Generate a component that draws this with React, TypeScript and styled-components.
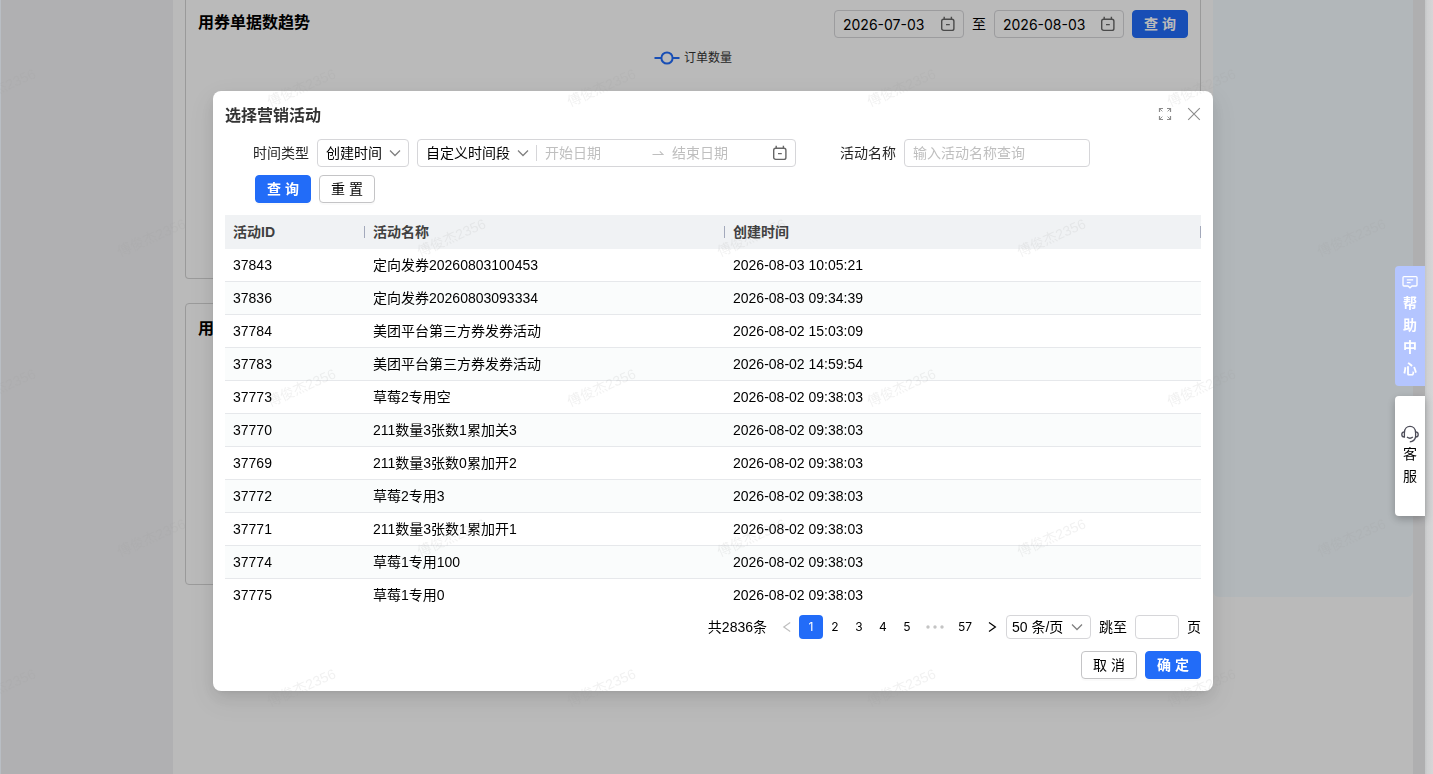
import React from "react";
import styled, { createGlobalStyle } from "styled-components";

const sans = `"Liberation Sans", "Noto Sans CJK SC", sans-serif`;
const digits = `Inter, "Noto Sans CJK SC", sans-serif`;
const primary = "#226cf8";

const GlobalStyle = createGlobalStyle`
  *, *::before, *::after { box-sizing: border-box; }
  body {
    margin: 0;
    font-family: ${sans};
    font-size: 14px;
    line-height: 22px;
    color: #000;
  }
  button, input, select { font: inherit; color: inherit; margin: 0; }
  h2, h3, p { margin: 0; }
`;

/* ---------- page behind the dialog ---------- */

const Page = styled.div`
  display: flex;
  min-height: 100vh;
  background: #fff;
`;

const Sidebar = styled.aside`
  flex: none;
  width: 173px;
  background: #f1f1f4;
  border-left: 1px solid #b9bec4;
`;

const Main = styled.main`
  flex: 1;
  min-width: 0;
`;

const Columns = styled.div`
  display: flex;
`;

const Cards = styled.div`
  flex: 1;
  min-width: 0;
  display: flex;
  flex-direction: column;
  gap: 24px;
  padding: 0 12px 12px;
`;

const SidePanel = styled.aside`
  flex: none;
  width: 200px;
  background: #f4fbff;
  border-radius: 0 0 6px 6px;
`;

const Gutter = styled.div`
  flex: none;
  width: 12px;
  background: #f0f0f2;
`;

const ScrollTrack = styled.div`
  flex: none;
  width: 8px;
  background: linear-gradient(to right, #c4c6c7, #cfd0d1 30%, #d6d6d7);
`;

const Card = styled.section<{ $continued?: boolean }>`
  min-height: ${(p) => (p.$continued ? "279px" : "282px")};
  padding: ${(p) => (p.$continued ? "10px 12px 12px" : "12px")};
  border: 1px solid #d4d4d4;
  border-top-width: ${(p) => (p.$continued ? "0" : "1px")};
  border-radius: ${(p) => (p.$continued ? "0 0 4px 4px" : "4px")};
`;

const CardHeader = styled.div`
  display: flex;
  justify-content: space-between;
  align-items: flex-start;
`;

const CardTitle = styled.h3`
  font-size: 16px;
  line-height: 26px;
  font-weight: 600;
`;

const CardTools = styled.div`
  display: flex;
  align-items: center;
  gap: 8px;
`;

const Legend = styled.p`
  display: flex;
  justify-content: center;
  align-items: center;
  gap: 4px;
  margin-top: 9px;
  font-size: 12px;
  color: #333;
`;

/* ---------- controls ---------- */

const Field = styled.div<{ $width?: number; $small?: boolean; $digits?: boolean }>`
  position: relative;
  display: flex;
  align-items: center;
  width: ${(p) => (p.$width ? `${p.$width}px` : "auto")};
  height: ${(p) => (p.$small ? "24px" : "28px")};
  border: 1px solid #d6d6d9;
  border-radius: 4px;
  font-family: ${(p) => (p.$digits ? digits : sans)};

  & > svg {
    flex: none;
    margin-right: 7px;
  }
`;

const TextInput = styled.input<{ $width?: number }>`
  flex: ${(p) => (p.$width ? "none" : "1")};
  width: ${(p) => (p.$width ? `${p.$width}px` : "auto")};
  min-width: 0;
  height: 100%;
  padding: 0 8px;
  border: 0;
  outline: 0;
  background: transparent;

  &::placeholder {
    color: #bfbfbf;
    opacity: 1;
  }
`;

const Picker = styled.select<{ $small?: boolean }>`
  appearance: none;
  flex: 1;
  min-width: 0;
  height: 100%;
  padding: 0 0 0 ${(p) => (p.$small ? "5px" : "8px")};
  border: 0;
  outline: 0;
  background: transparent;
`;

const Divider = styled.span`
  flex: none;
  width: 1px;
  height: 16px;
  background: #d6d6d9;
`;

const RangeSeparator = styled.span`
  display: flex;
  align-items: center;
  justify-content: center;
  flex: none;
  width: 12px;
`;

const Button = styled.button<{ $primary?: boolean }>`
  width: 56px;
  height: 28px;
  padding: 0;
  border: 1px solid ${(p) => (p.$primary ? primary : "#c4c4c6")};
  border-radius: 4px;
  background: ${(p) => (p.$primary ? primary : "#fff")};
  color: ${(p) => (p.$primary ? "#fff" : "#000")};
  font-weight: ${(p) => (p.$primary ? 600 : 400)};
  line-height: 22px;
  box-shadow: 0 2px 0 rgba(0, 0, 0, 0.02);
`;

const IconButton = styled.button`
  display: flex;
  align-items: center;
  justify-content: center;
  width: 14px;
  height: 14px;
  padding: 0;
  border: 0;
  background: none;
  color: #8c8c8c;
`;

/* ---------- dialog ---------- */

const Mask = styled.div`
  position: fixed;
  inset: 0 8px 0 1px;
  display: grid;
  place-items: center;
  padding-top: 8px;
  background: rgba(0, 0, 0, 0.27);
`;

const Dialog = styled.section`
  width: 1000px;
  max-width: calc(100% - 32px);
  display: flex;
  flex-direction: column;
  padding: 12px;
  border-radius: 8px;
  background: #fff;
  box-shadow:
    0 6px 16px rgba(0, 0, 0, 0.08),
    0 3px 6px -4px rgba(0, 0, 0, 0.12),
    0 9px 28px 8px rgba(0, 0, 0, 0.05);
`;

const DialogHeader = styled.header`
  display: flex;
  justify-content: space-between;
  height: 24px;
`;

const DialogTitle = styled.h2`
  font-size: 16px;
  line-height: 26px;
  font-weight: 600;
  color: #333;
`;

const HeaderActions = styled.div`
  display: flex;
  gap: 15px;
  padding-top: 4px;
`;

const Filters = styled.form`
  display: flex;
  flex-wrap: wrap;
  align-items: center;
  gap: 8px;
  margin: 12px 0;
  padding-left: 28px;
`;

const FilterLabel = styled.label<{ $spaced?: boolean }>`
  margin-left: ${(p) => (p.$spaced ? "36px" : "0")};
  color: #262626;
`;

const FilterButtons = styled.div`
  flex-basis: 100%;
  display: flex;
  gap: 8px;
  padding-left: 2px;
`;

const TableViewport = styled.div`
  height: 394px;
  overflow: hidden;
`;

const Table = styled.table`
  width: 100%;
  table-layout: fixed;
  border-collapse: separate;
  border-spacing: 0;
`;

const HeadCell = styled.th<{ $width?: number }>`
  position: relative;
  width: ${(p) => (p.$width ? `${p.$width}px` : "auto")};
  height: 34px;
  padding: 0 8px;
  background: #f0f2f4;
  text-align: left;
  font-weight: 600;
  color: #404040;

  &::after {
    content: "";
    position: absolute;
    top: 11px;
    right: 0;
    width: 1px;
    height: 12px;
    background: #a3a9bb;
  }
`;

const Row = styled.tr`
  &:nth-child(even) {
    background: #fafcfc;
  }
`;

const Cell = styled.td`
  height: 33px;
  padding: 0 8px;
  border-bottom: 1px solid #e6e8eb;
  white-space: nowrap;
`;

const Pagination = styled.nav`
  display: flex;
  justify-content: flex-end;
  align-items: center;
  gap: 8px;
  margin-top: 6px;
`;

const Pages = styled.div`
  display: flex;
  margin-right: -8px;
  font-family: ${digits};
  font-size: 12px;
`;

const PageButton = styled.button<{ $active?: boolean; $width?: number; $muted?: boolean }>`
  display: flex;
  align-items: center;
  justify-content: center;
  width: ${(p) => p.$width ?? 24}px;
  height: 24px;
  padding: 0;
  border: 0;
  border-radius: 4px;
  background: ${(p) => (p.$active ? primary : "transparent")};
  color: ${(p) => (p.$active ? "#fff" : p.$muted ? "#bfbfbf" : "#000")};
`;

const DialogFooter = styled.footer`
  display: flex;
  justify-content: flex-end;
  gap: 8px;
  margin-top: 12px;
`;

/* ---------- floating tabs and watermark ---------- */

const Floating = styled.div`
  position: fixed;
  top: 266px;
  right: 8px;
  display: flex;
  flex-direction: column;
  gap: 10px;
`;

const FloatTab = styled.button<{ $accent?: boolean }>`
  display: flex;
  flex-direction: column;
  align-items: center;
  justify-content: center;
  width: 30px;
  height: 120px;
  padding: 0 8px;
  border: 0;
  border-radius: 4px 0 0 4px;
  background: ${(p) => (p.$accent ? "#b4c5ff" : "#fff")};
  color: ${(p) => (p.$accent ? "#fff" : "#000")};
  font-weight: ${(p) => (p.$accent ? 600 : 400)};
  line-height: 22px;
  box-shadow: ${(p) => (p.$accent ? "none" : "0 3px 8px rgba(0, 0, 0, 0.25)")};
`;

const WatermarkLayer = styled.svg`
  position: fixed;
  inset: 0;
  width: 100%;
  height: 100%;
  pointer-events: none;
  font-family: ${sans};
  font-size: 14px;
`;

/* ---------- icons ---------- */

const CalendarIcon = () => (
  <svg width="16" height="16" viewBox="0 0 16 16" fill="none" stroke="#666" strokeWidth="1.4" aria-hidden="true">
    <rect x="1.7" y="3.2" width="12.2" height="11.2" rx="2" />
    <path d="M4.2 0.8V3.4M11.4 0.8V3.4M6 8.6H9.8" />
  </svg>
);

const ChevronDown = () => (
  <svg width="12" height="12" viewBox="0 0 12 12" fill="none" stroke="#808080" strokeWidth="1.3" aria-hidden="true">
    <path d="M1 3.5L6 8.5L11 3.5" />
  </svg>
);

const SwapArrow = () => (
  <svg width="12" height="14" viewBox="0 0 12 14" fill="none" stroke="#bfbfbf" strokeWidth="1.1" aria-hidden="true">
    <path d="M0.5 8.5H11L7.8 5.4" />
  </svg>
);

const FullscreenIcon = () => (
  <svg width="14" height="14" viewBox="0 0 14 14" fill="none" stroke="currentColor" strokeWidth="1.2" aria-hidden="true">
    <path d="M1.5 5V1.5H5M9 1.5H12.5V5M12.5 9V12.5H9M5 12.5H1.5V9" />
    <path d="M1.5 1.5L4.4 4.4M12.5 1.5L9.6 4.4M12.5 12.5L9.6 9.6M1.5 12.5L4.4 9.6" strokeWidth="0.9" />
  </svg>
);

const CloseIcon = () => (
  <svg width="14" height="14" viewBox="0 0 14 14" fill="none" stroke="currentColor" strokeWidth="1.1" aria-hidden="true">
    <path d="M1.2 1.2L12.8 12.8M12.8 1.2L1.2 12.8" />
  </svg>
);

const PageArrow = ({ next }: { next?: boolean }) => (
  <svg width="10" height="12" viewBox="0 0 10 12" fill="none" stroke="currentColor" strokeWidth="1.2" aria-hidden="true">
    <path d={next ? "M1 1.6L7.4 6L1 10.4" : "M8.2 1.6L1.8 6L8.2 10.4"} />
  </svg>
);

const EllipsisIcon = () => (
  <svg width="18" height="4" viewBox="0 0 18 4" fill="#c4c4c4" aria-hidden="true">
    <circle cx="2" cy="2" r="1.7" />
    <circle cx="9" cy="2" r="1.7" />
    <circle cx="16" cy="2" r="1.7" />
  </svg>
);

const LegendMark = () => (
  <svg width="26" height="14" viewBox="0 0 26 14" fill="none" stroke={primary} strokeWidth="2" aria-hidden="true">
    <path d="M0.5 7H7M19 7H25.5" />
    <circle cx="13" cy="7" r="5.6" />
  </svg>
);

const MessageIcon = () => (
  <svg width="16" height="20" viewBox="0 0 16 20" fill="none" stroke="currentColor" strokeWidth="1.3" aria-hidden="true">
    <path d="M2 4.6H14Q15 4.6 15 5.6V13Q15 14 14 14H10L8 15.8L6 14H2Q1 14 1 13V5.6Q1 4.6 2 4.6Z" />
    <path d="M4.8 7.8H11.2M4.8 10.6H8.6" />
  </svg>
);

const HeadsetIcon = () => (
  <svg width="18" height="18" viewBox="0 0 18 18" fill="none" stroke="#4c4c58" strokeWidth="1.3" aria-hidden="true">
    <path d="M3.4 7.4C3.6 3.8 6 1.4 9 1.4S14.4 3.8 14.6 7.4" />
    <path d="M3.4 6.8V12C1.8 12 0.8 11.2 0.8 9.4S1.8 6.8 3.4 6.8ZM14.6 6.8V12C16.2 12 17.2 11.2 17.2 9.4S16.2 6.8 14.6 6.8Z" />
    <path d="M14.6 12C14 15 12 16.6 8.8 16.8M6 12C7.6 13.4 10.2 13.4 11.8 12" />
  </svg>
);

/* ---------- data ---------- */

const activities = [
  ["37843", "定向发券20260803100453", "2026-08-03 10:05:21"],
  ["37836", "定向发券20260803093334", "2026-08-03 09:34:39"],
  ["37784", "美团平台第三方券发券活动", "2026-08-02 15:03:09"],
  ["37783", "美团平台第三方券发券活动", "2026-08-02 14:59:54"],
  ["37773", "草莓2专用空", "2026-08-02 09:38:03"],
  ["37770", "211数量3张数1累加关3", "2026-08-02 09:38:03"],
  ["37769", "211数量3张数0累加开2", "2026-08-02 09:38:03"],
  ["37772", "草莓2专用3", "2026-08-02 09:38:03"],
  ["37771", "211数量3张数1累加开1", "2026-08-02 09:38:03"],
  ["37774", "草莓1专用100", "2026-08-02 09:38:03"],
  ["37775", "草莓1专用0", "2026-08-02 09:38:03"],
];

const DateField = ({ label, value }: { label: string; value: string }) => (
  <Field $width={130} $digits>
    <TextInput aria-label={label} defaultValue={value} />
    <CalendarIcon />
  </Field>
);

const Watermark = () => (
  <WatermarkLayer aria-hidden="true">
    <defs>
      <pattern id="watermark" width="300" height="300" patternUnits="userSpaceOnUse">
        <g fill="#a0a0a0" fillOpacity="0.14">
          <text transform="translate(270 107) rotate(-24)">傅俊杰2356</text>
          <text transform="translate(-30 107) rotate(-24)">傅俊杰2356</text>
          <text transform="translate(120 257) rotate(-24)">傅俊杰2356</text>
        </g>
      </pattern>
    </defs>
    <rect width="100%" height="100%" fill="url(#watermark)" />
  </WatermarkLayer>
);

export default function App() {
  return (
    <>
      <GlobalStyle />
      <Page>
        <Sidebar />
        <Main>
          <Columns>
            <Cards>
              <Card $continued>
                <CardHeader>
                  <CardTitle>用券单据数趋势</CardTitle>
                  <CardTools>
                    <DateField label="开始日期" value="2026-07-03" />
                    <span>至</span>
                    <DateField label="结束日期" value="2026-08-03" />
                    <Button type="button" $primary>查 询</Button>
                  </CardTools>
                </CardHeader>
                <Legend>
                  <LegendMark />
                  订单数量
                </Legend>
              </Card>
              <Card>
                <CardTitle>用</CardTitle>
              </Card>
            </Cards>
            <SidePanel />
          </Columns>
        </Main>
        <Gutter />
        <ScrollTrack />
      </Page>

      <Mask>
        <Dialog role="dialog" aria-modal="true" aria-labelledby="dialog-title">
          <DialogHeader>
            <DialogTitle id="dialog-title">选择营销活动</DialogTitle>
            <HeaderActions>
              <IconButton type="button" aria-label="全屏">
                <FullscreenIcon />
              </IconButton>
              <IconButton type="button" aria-label="关闭">
                <CloseIcon />
              </IconButton>
            </HeaderActions>
          </DialogHeader>

          <Filters onSubmit={(e) => e.preventDefault()}>
            <FilterLabel htmlFor="time-type">时间类型</FilterLabel>
            <Field $width={92}>
              <Picker id="time-type">
                <option>创建时间</option>
              </Picker>
              <ChevronDown />
            </Field>
            <Field $width={379}>
              <Picker aria-label="时间段">
                <option>自定义时间段</option>
              </Picker>
              <ChevronDown />
              <Divider />
              <TextInput $width={115} placeholder="开始日期" aria-label="开始日期" />
              <RangeSeparator>
                <SwapArrow />
              </RangeSeparator>
              <TextInput $width={108} placeholder="结束日期" aria-label="结束日期" />
              <CalendarIcon />
            </Field>
            <FilterLabel htmlFor="activity-name" $spaced>活动名称</FilterLabel>
            <Field $width={186}>
              <TextInput id="activity-name" placeholder="输入活动名称查询" />
            </Field>
            <FilterButtons>
              <Button type="submit" $primary>查 询</Button>
              <Button type="reset">重 置</Button>
            </FilterButtons>
          </Filters>

          <TableViewport>
            <Table>
              <thead>
                <tr>
                  <HeadCell $width={140}>活动ID</HeadCell>
                  <HeadCell $width={360}>活动名称</HeadCell>
                  <HeadCell>创建时间</HeadCell>
                </tr>
              </thead>
              <tbody>
                {activities.map(([id, name, created]) => (
                  <Row key={id}>
                    <Cell>{id}</Cell>
                    <Cell>{name}</Cell>
                    <Cell>{created}</Cell>
                  </Row>
                ))}
              </tbody>
            </Table>
          </TableViewport>

          <Pagination aria-label="分页">
            <span>共2836条</span>
            <Pages>
              <PageButton type="button" aria-label="上一页" $muted>
                <PageArrow />
              </PageButton>
              <PageButton type="button" $active>1</PageButton>
              <PageButton type="button">2</PageButton>
              <PageButton type="button">3</PageButton>
              <PageButton type="button">4</PageButton>
              <PageButton type="button">5</PageButton>
              <PageButton type="button" aria-label="向后 5 页" $width={32}>
                <EllipsisIcon />
              </PageButton>
              <PageButton type="button" $width={28}>57</PageButton>
              <PageButton type="button" aria-label="下一页" $width={27}>
                <PageArrow next />
              </PageButton>
            </Pages>
            <Field $width={85} $small>
              <Picker $small aria-label="每页条数">
                <option>50 条/页</option>
              </Picker>
              <ChevronDown />
            </Field>
            <label htmlFor="jump-page">跳至</label>
            <Field $width={44} $small>
              <TextInput id="jump-page" />
            </Field>
            <span>页</span>
          </Pagination>

          <DialogFooter>
            <Button type="button">取 消</Button>
            <Button type="button" $primary>确 定</Button>
          </DialogFooter>
        </Dialog>
      </Mask>

      <Floating>
        <FloatTab type="button" $accent>
          <MessageIcon />
          帮助中心
        </FloatTab>
        <FloatTab type="button">
          <HeadsetIcon />
          客服
        </FloatTab>
      </Floating>
      <Watermark />
    </>
  );
}
